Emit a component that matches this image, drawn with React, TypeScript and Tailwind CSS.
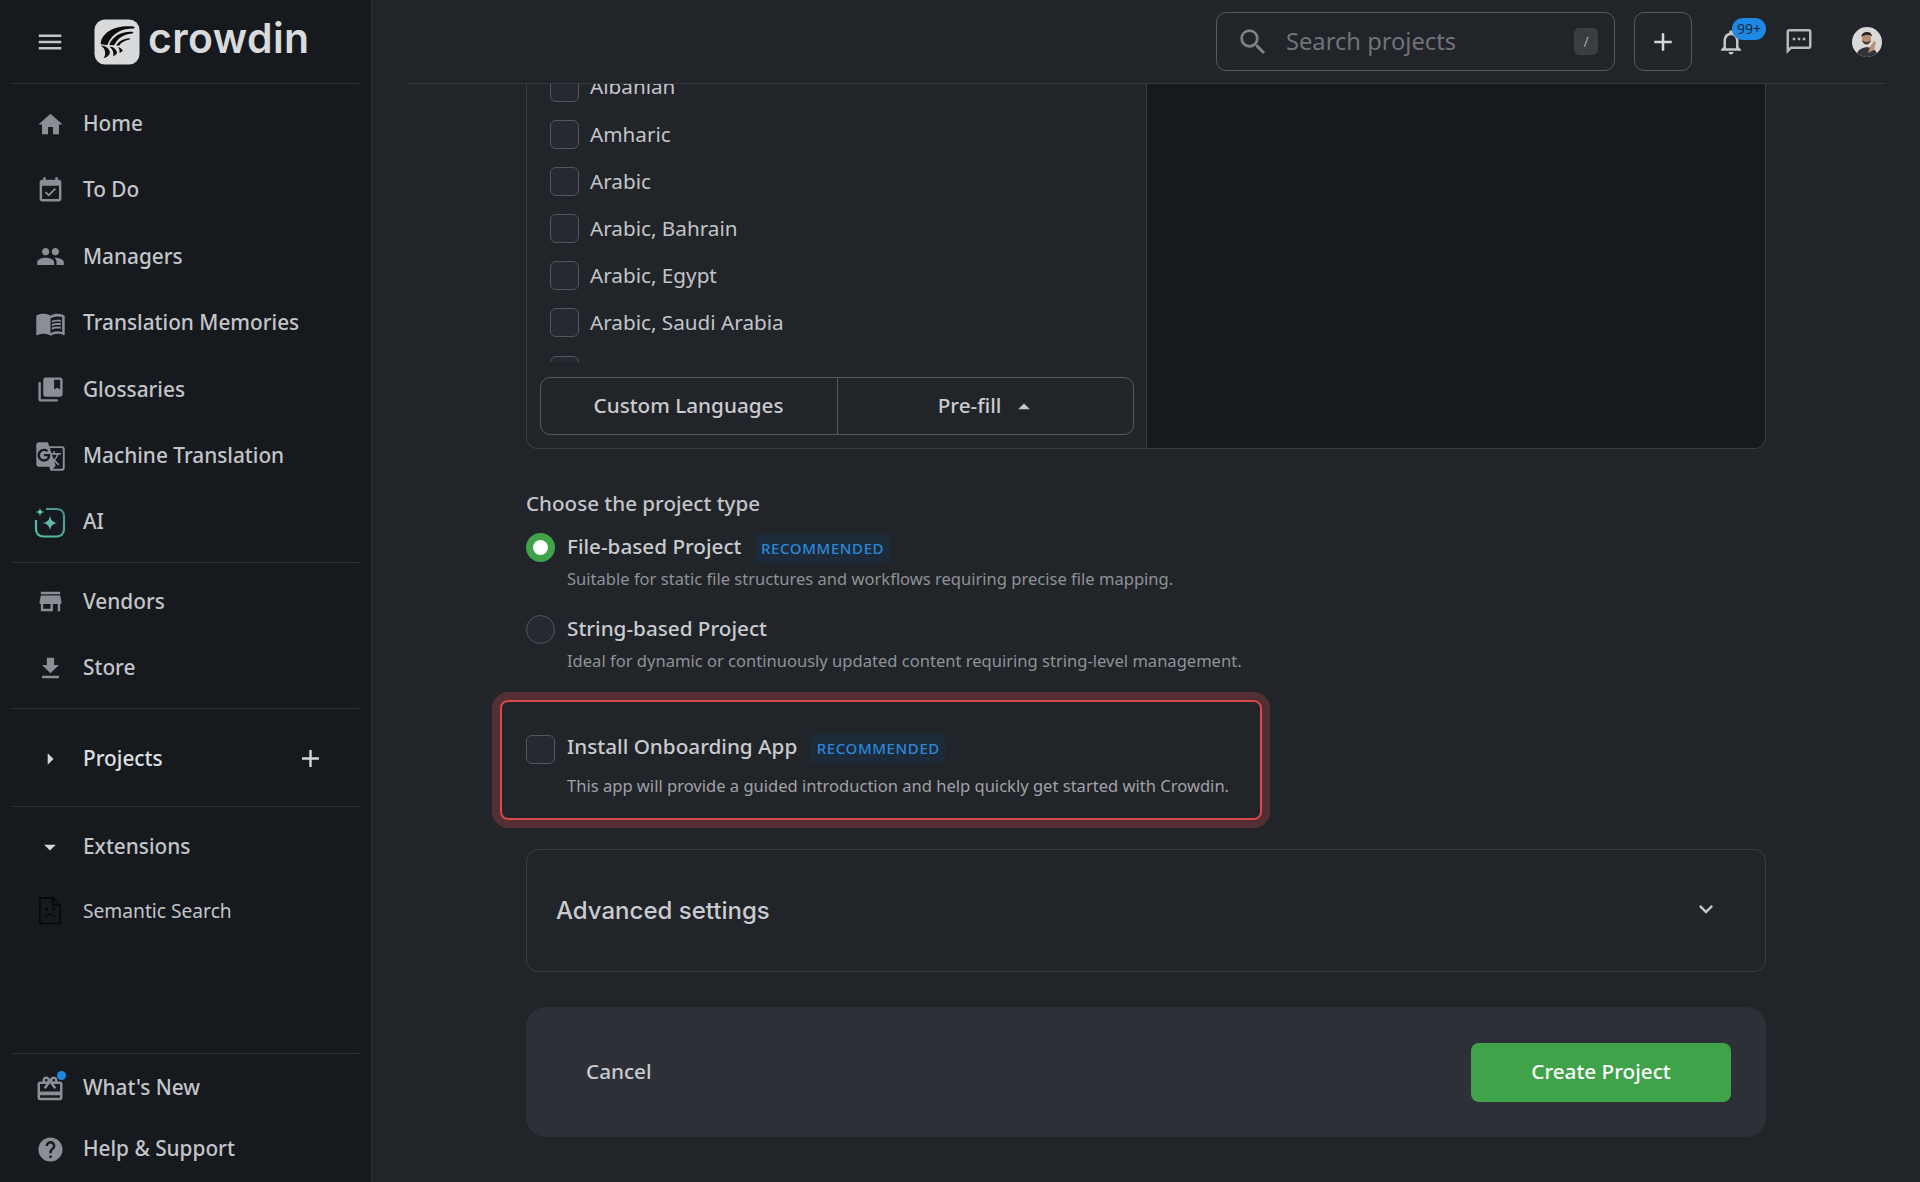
import React from "react";
import {
  MdMenu, MdHome, MdEventAvailable, MdPeople, MdMenuBook, MdCollectionsBookmark, MdGTranslate,
  MdStore, MdGetApp, MdArrowRight, MdArrowDropDown, MdArrowDropUp, MdAdd, MdHelp, MdSearch,
  MdNotificationsNone, MdOutlineSms, MdKeyboardArrowDown, MdOutlineCardGiftcard,
} from "react-icons/md";

const font = { fontFamily: '"Noto Sans", sans-serif' };

function Logo() {
  return (
    <svg width="46" height="46" viewBox="0 0 48 48" className="shrink-0">
      <rect x="0.5" y="0.5" width="47" height="47" rx="11" fill="#d9dadb" />
      <path d="M7 26C8 14 22 6 42 8C43 9 42 10 41 10C30 10 19 14 14 27C12 27 9 27 7 26Z" fill="#0d0d0e" />
      <path d="M16 27C19 18 29 12.500 41 13.500C41 14.500 40 15 39 15.500C31 16 25 20 21 27.500Z" fill="#0d0d0e" />
      <path d="M23 27.500C26 23 31 20 38 20C37 21.500 36 22 35 22C31 23 28 25 26 28Z" fill="#0d0d0e" />
      <path d="M7 28C12 28 15 30 16.500 34C17 37 14 40 10 41C12 38 12 35 11 32C10 30 8.500 29 7 28Z" fill="#0d0d0e" />
      <path d="M16 29C20 29 23 31 24 35C24 37 22 38 20 39C21 35 19 31 16 29Z" fill="#0d0d0e" />
      <path d="M25 29.500C27 29.500 29 31 30 33C29 34 28 35 26.500 35C27 33 26.500 31 25 29.500Z" fill="#0d0d0e" />
    </svg>
  );
}

function AiIcon() {
  return (
    <svg width="32" height="32" viewBox="0 0 32 32">
      <defs>
        <linearGradient id="ai" x1="0" y1="1" x2="1" y2="0">
          <stop offset="0" stopColor="#55c7a5" />
          <stop offset="1" stopColor="#4a8f92" />
        </linearGradient>
      </defs>
      <path d="M2 13V22C2 26.500 5 29.500 9.500 29.500H22.500C27 29.500 30 26.500 30 22V9.500C30 5 27 2 22.500 2H12" fill="none" stroke="url(#ai)" strokeWidth="2.200" />
      <path d="M16 8.500C16.500 13 19 15.500 23.500 16C19 16.500 16.500 19 16 23.500C15.500 19 13 16.500 8.500 16C13 15.500 15.500 13 16 8.500Z" fill="#5fb9a6" />
      <path d="M6 0.500C6.400 3.500 7.500 4.600 10.500 5C7.500 5.400 6.400 6.500 6 9.500C5.600 6.500 4.500 5.400 1.500 5C4.500 4.600 5.600 3.500 6 0.500Z" fill="#55c7a5" />
    </svg>
  );
}

function BrokenDoc() {
  return (
    <svg width="22" height="28" viewBox="0 0 22 28" fill="none" stroke="#050506" strokeWidth="1.300">
      <path d="M1 1H14L21 8V26.500H1Z" />
      <path d="M14 1V8H21" />
      <circle cx="7.500" cy="12" r="0.800" />
      <circle cx="14.500" cy="12" r="0.800" />
      <path d="M6 20C8 16.500 14 16.500 16 20" />
    </svg>
  );
}

function Avatar() {
  return (
    <svg width="30" height="30" viewBox="0 0 30 30" className="rounded-full">
      <rect width="30" height="30" fill="#d9d9da" />
      <path d="M4 30C5 23 9 21 15 20C21 21 25 23 26 30Z" fill="#333335" />
      <ellipse cx="14.500" cy="11.500" rx="4.500" ry="6" fill="#b98d78" />
      <path d="M9.500 10C9 4 20 3 20 9.500C18 7.500 12 7.500 9.500 10Z" fill="#2b2523" />
      <path d="M10 13C11.500 19 17.500 19 19 13C17 15.500 12.500 15.500 10 13Z" fill="#4a3a33" />
      <path d="M18 20L22 14L24 15L22 23L16 26Z" fill="#b98d78" />
    </svg>
  );
}

type Item = { label: string; icon: React.ReactNode };

function NavRow({ icon, label }: { icon: React.ReactNode; label: string }) {
  return (
    <div className="flex h-[66.4px] items-center">
      <div className="ml-[22px] mr-[17px] flex w-[32px] justify-center text-[#8b8e95]">{icon}</div>
      <span className="-mt-[1px] text-[20.800px] font-medium text-[#c3c5c9]">{label}</span>
    </div>
  );
}

function Check({ className = "" }: { className?: string }) {
  return <div className={`h-[29px] w-[29px] shrink-0 rounded-[6px] border border-[#53565c] bg-[#262932] ${className}`} />;
}

function Badge() {
  return (
    <span className="ml-[14px] mt-[2px] flex h-[29px] w-[134px] items-center justify-center rounded-[4px] bg-[#1d2a3a] text-[15px] font-medium tracking-[0.6px] text-[#2b88d8]">
      RECOMMENDED
    </span>
  );
}

function Option({ title, desc, badge, radio }: { title: string; desc: string; badge?: boolean; radio: React.ReactNode }) {
  return (
    <div className="flex">
      <div className="w-[41px] shrink-0 pt-[1px]">{radio}</div>
      <div>
        <div className="flex h-[30px] items-center">
          <span className="-mt-[1px] text-[20.700px] font-medium text-[#c9cbce]">{title}</span>
          {badge && <Badge />}
        </div>
        <div className="mt-[3px] flex h-[28px] items-center text-[16.560px] text-[#8f9297]">{desc}</div>
      </div>
    </div>
  );
}

export default function App() {
  const main: Item[] = [
    { label: "Home", icon: <MdHome size={29} /> },
    { label: "To Do", icon: <MdEventAvailable size={29} /> },
    { label: "Managers", icon: <MdPeople size={29} /> },
    { label: "Translation Memories", icon: <MdMenuBook size={31} /> },
    { label: "Glossaries", icon: <MdCollectionsBookmark size={29} /> },
    { label: "Machine Translation", icon: <MdGTranslate size={31} /> },
    { label: "AI", icon: <AiIcon /> },
  ];
  const langs = ["Albanian", "Amharic", "Arabic", "Arabic, Bahrain", "Arabic, Egypt", "Arabic, Saudi Arabia", ""];
  return (
    <div className="flex h-[1182px] w-[1920px] overflow-hidden bg-[#212429]" style={font}>
      <aside className="flex h-full w-[372px] shrink-0 flex-col border-r border-[#2d3035] bg-[#16191d]">
        <div className="mx-[12px] flex h-[84px] shrink-0 items-center border-b border-[#2d3035]">
          <MdMenu size={30} className="ml-[23px] text-[#c3c5c9]" />
          <div className="ml-[29px]"><Logo /></div>
          <span className="-mt-[6px] ml-[8px] text-[41px] font-semibold leading-none tracking-[0.4px] text-[#d9dadb]" style={{ fontFamily: "Inter, sans-serif" }}>crowdin</span>
        </div>
        <div className="mx-[12px] shrink-0 border-b border-[#2d3035] pb-[6px] pt-[7px]">
          {main.map((m) => <NavRow key={m.label} {...m} />)}
        </div>
        <div className="mx-[12px] shrink-0 border-b border-[#2d3035] py-[6px]">
          <NavRow label="Vendors" icon={<MdStore size={29} />} />
          <NavRow label="Store" icon={<MdGetApp size={29} />} />
        </div>
        <div className="mx-[12px] shrink-0 border-b border-[#2d3035] pb-[14px] pt-[17px]">
          <div className="flex h-[66.4px] items-center">
            <div className="ml-[22px] mr-[17px] flex w-[32px] justify-center text-[#d5d6d8]"><MdArrowRight size={28} /></div>
            <span className="-mt-[1px] text-[20.800px] font-medium text-[#dfe0e2]">Projects</span>
            <MdAdd size={29} className="ml-auto mr-[34px] text-[#d5d6d8]" />
          </div>
        </div>
        <div className="mx-[12px] pt-[7px]">
          <div className="flex h-[66px] items-center">
            <div className="ml-[22px] mr-[17px] flex w-[32px] justify-center text-[#d5d6d8]"><MdArrowDropDown size={28} /></div>
            <span className="text-[20.800px] font-medium text-[#c3c5c9]">Extensions</span>
          </div>
          <div className="flex h-[62px] items-center">
            <div className="ml-[22px] mr-[17px] flex w-[32px] justify-center"><BrokenDoc /></div>
            <span className="text-[19.200px] text-[#c3c5c9]">Semantic Search</span>
          </div>
        </div>
        <div className="mx-[12px] mt-auto border-t border-[#2d3035] pb-[2px] pt-[4px]">
          <div className="flex h-[61px] items-center">
            <div className="relative ml-[22px] mr-[17px] flex w-[32px] justify-center text-[#8b8e95]">
              <MdOutlineCardGiftcard size={30} />
              <span className="absolute right-[0px] top-[-3px] h-[9px] w-[9px] rounded-full bg-[#1e88e5]" />
            </div>
            <span className="-mt-[1px] text-[20.800px] font-medium text-[#c3c5c9]">What's New</span>
          </div>
          <div className="flex h-[61px] items-center">
            <div className="ml-[22px] mr-[17px] flex w-[32px] justify-center text-[#8b8e95]"><MdHelp size={29} /></div>
            <span className="-mt-[1px] text-[20.800px] font-medium text-[#c3c5c9]">Help & Support</span>
          </div>
        </div>
      </aside>

      <main className="flex min-w-0 flex-1 flex-col">
        <header className="ml-[36px] mr-[35px] flex h-[84px] shrink-0 items-center justify-end border-b border-[#33363b] pr-[3px]">
          <div className="flex h-[59px] w-[399px] items-center rounded-[10px] border border-[#55585d] pl-[19px] pr-[16px]">
            <MdSearch size={34} className="text-[#7d8085]" />
            <span className="ml-[16px] text-[23.700px] text-[#707378]">Search projects</span>
            <span className="ml-auto flex h-[27px] w-[24px] items-center justify-center rounded-[5px] bg-[#3a3d42] text-[14px] text-[#a5a7aa]">/</span>
          </div>
          <div className="ml-[19px] flex h-[59px] w-[58px] items-center justify-center rounded-[10px] border border-[#55585d] text-[#d5d6d8]">
            <MdAdd size={30} />
          </div>
          <div className="relative ml-[24px] flex w-[30px] justify-center text-[#c3c5c9]">
            <MdNotificationsNone size={30} />
            <span className="absolute left-[16px] top-[-9px] flex h-[22px] w-[34px] items-center justify-center rounded-full bg-[#1e88e5] text-[14px] text-[#10263c]">99+</span>
          </div>
          <div className="ml-[38px] flex w-[30px] justify-center text-[#b5b7ba]"><MdOutlineSms size={31} /></div>
          <div className="ml-[38px] flex w-[30px] justify-center"><Avatar /></div>
        </header>

        <div className="ml-[154px] w-[1240px]">
          <section className="flex h-[365px] rounded-b-[12px] border-x border-b border-[#3a3d42]">
            <div className="w-[620px] border-r border-[#3a3d42]">
              <div className="h-[278px] overflow-hidden pl-[23px]">
                <div className="-mt-[20.6px]">
                  {langs.map((l, i) => (
                    <div key={i} className="flex h-[47.200px] items-center">
                      <Check />
                      <span className="ml-[11px] text-[20.700px] text-[#c3c5c9]">{l}</span>
                    </div>
                  ))}
                </div>
              </div>
              <div className="ml-[12.500px] mt-[15px] flex h-[58px] w-[594px] rounded-[10px] border border-[#55585d] text-[20.700px] font-medium text-[#c9cbce]">
                <div className="flex w-[297px] items-center justify-center border-r border-[#55585d] pb-[1px]">Custom Languages</div>
                <div className="flex flex-1 items-center justify-center pb-[1px] pl-[6px]">Pre-fill<MdArrowDropUp size={28} className="ml-[9px] mt-[2px] text-[#c3c5c9]" /></div>
              </div>
            </div>
            <div className="flex-1 rounded-br-[11px] bg-[#171a1d]" />
          </section>

          <div className="mt-[40px] flex h-[28px] items-center text-[20.600px] font-medium text-[#c3c5c9]">Choose the project type</div>
          <div className="mt-[15px]">
            <Option
              title="File-based Project"
              desc="Suitable for static file structures and workflows requiring precise file mapping."
              badge
              radio={
                <div className="flex h-[29px] w-[29px] items-center justify-center rounded-full bg-[#3fa34a]">
                  <div className="h-[15px] w-[15px] rounded-full bg-white" />
                </div>
              }
            />
          </div>
          <div className="mt-[21px]">
            <Option
              title="String-based Project"
              desc="Ideal for dynamic or continuously updated content requiring string-level management."
              radio={<div className="h-[29px] w-[29px] rounded-full border border-[#53565c] bg-[#262932]" />}
            />
          </div>

          <div className="-ml-[26px] mt-[25px] h-[120px] w-[762px] rounded-[8px] border-2 border-[#d9484a] pl-[24px] pt-[30px] shadow-[0_0_0_8px_rgba(217,72,74,0.28)]">
            <div className="flex">
              <Check className="mr-[12px] mt-[3px]" />
              <div>
                <div className="flex h-[30px] items-center">
                  <span className="-mt-[1px] text-[20.700px] font-medium text-[#c9cbce]">Install Onboarding App</span>
                  <Badge />
                </div>
                <div className="mt-[10px] flex h-[28px] items-center whitespace-nowrap text-[16.560px] text-[#a0a2a6]">This app will provide a guided introduction and help quickly get started with Crowdin.</div>
              </div>
            </div>
          </div>

          <div className="mt-[29px] flex h-[123px] items-center justify-between rounded-[12px] border border-[#3a3d42] pl-[29px] pr-[45px]">
            <span className="text-[24px] font-medium text-[#c9cbce]" style={{ fontFamily: "Inter, sans-serif" }}>Advanced settings</span>
            <MdKeyboardArrowDown size={28} className="-mt-[4px] text-[#c3c5c9]" />
          </div>

          <div className="mt-[35px] flex h-[130px] items-center justify-between rounded-[20px] bg-[#2d3037] pl-[60px] pr-[35px]">
            <span className="text-[20.700px] font-medium text-[#c9cbce]">Cancel</span>
            <button className="flex h-[59px] w-[260px] items-center justify-center rounded-[8px] bg-[#3fa34a] text-[20.700px] font-medium text-white">Create Project</button>
          </div>
        </div>
      </main>
    </div>
  );
}
